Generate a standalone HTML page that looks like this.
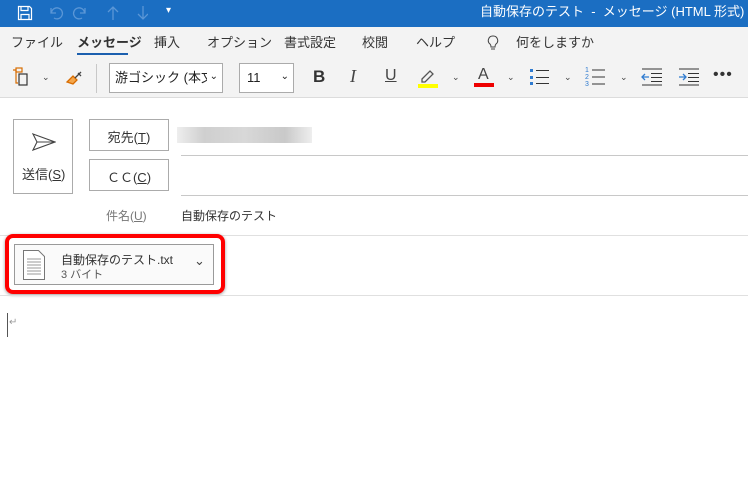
<!DOCTYPE html>
<html><head><meta charset="utf-8"><style>
*{margin:0;padding:0;box-sizing:border-box}
body{width:748px;height:499px;overflow:hidden;background:#fff;font-family:"Liberation Sans","Noto Sans CJK JP",sans-serif;color:#333;position:relative}
.a{position:absolute}
#title{left:0;top:0;width:748px;height:27px;background:#1b6ec2;color:#fff}
#ribbon{left:0;top:27px;width:748px;height:71px;background:#f3f3f3;border-bottom:1px solid #dcdcdc}
.t{font-size:13px;top:34px;color:#333;line-height:18px}
.box{border:1px solid #ababab;background:#fff}
.ln{height:1px;background:#c8c8c8}
</style></head><body>
<div id="title" class="a">
<svg class="a" style="left:17px;top:5px" width="16" height="16" viewBox="0 0 16 16" fill="none" stroke="#fff" stroke-width="1.2"><path d="M1.5 1.5h11l2 2v11h-13z M4 1.5v4h7v-4 M4 14.5v-5h8v5"/></svg>
<svg class="a" style="left:48px;top:5px" width="100" height="16" viewBox="0 0 100 16" fill="none" stroke="#5a96d6" stroke-width="1.3"><path d="M3 3v5h5 M3.5 7.5A5.5 5.5 0 1 1 6 13"/><path d="M37 3v5h-5 M36.5 7.5A5.5 5.5 0 1 0 34 13"/><path d="M65 15V2 M60 7l5-5 5 5"/><path d="M95 1v13 M90 9l5 5 5-5"/></svg>
<div class="a" style="left:166px;top:5px;font-size:10px;color:#fff">▾</div>
<div class="a" style="left:480px;top:3px;font-size:13px;line-height:18px">自動保存のテスト &nbsp;- &nbsp;メッセージ (HTML 形式)</div>
</div>
<div id="ribbon" class="a"></div>
<div class="a t" style="left:11px">ファイル</div>
<div class="a t" style="left:77px;font-weight:bold">メッセージ</div>
<div class="a" style="left:77px;top:53px;width:51px;height:2px;background:#1b5fae"></div>
<div class="a t" style="left:154px">挿入</div>
<div class="a t" style="left:207px">オプション</div>
<div class="a t" style="left:284px">書式設定</div>
<div class="a t" style="left:362px">校閲</div>
<div class="a t" style="left:416px">ヘルプ</div>
<svg class="a" style="left:487px;top:35px" width="12" height="16" viewBox="0 0 12 16" fill="none" stroke="#444" stroke-width="1"><path d="M6 1a4.5 4.5 0 0 0-3 8c1 1 1 2 1 3h4c0-1 0-2 1-3A4.5 4.5 0 0 0 6 1z M4 14h4"/></svg>
<div class="a t" style="left:516px">何をしますか</div>
<svg class="a" style="left:11px;top:66px" width="22" height="22" viewBox="0 0 22 22" fill="none" stroke-width="1.2"><path d="M2 4h3v13h2" stroke="#d86c00"/><rect x="5" y="2" width="6" height="4" stroke="#d86c00"/><rect x="8" y="8" width="8" height="11" stroke="#333"/></svg>
<div class="a" style="left:42px;top:72px;font-size:9px;color:#444">⌄</div>
<svg class="a" style="left:65px;top:68px" width="20" height="18" viewBox="0 0 20 18" fill="none" stroke-width="1.3"><path d="M2 14l6-6 4 4-4 4z" stroke="#d86c00" fill="#f5a64a"/><path d="M10 10l6-6M13 5l3 3" stroke="#444"/></svg>
<div class="a" style="left:96px;top:64px;width:1px;height:29px;background:#c8c8c8"></div>
<div class="a box" style="left:109px;top:63px;width:114px;height:30px;font-size:13px;line-height:16px;padding:6px 0 0 5px;color:#222;white-space:nowrap;overflow:hidden">游ゴシック (本文の<span class="a" style="right:0;top:5px;background:#fff;padding:0 4px 0 3px;font-size:10px">⌄</span></div>
<div class="a box" style="left:239px;top:63px;width:55px;height:30px;font-size:13px;line-height:16px;padding:6px 0 0 7px;color:#222">11<span class="a" style="right:4px;top:5px;font-size:10px">⌄</span></div>
<div class="a" style="left:313px;top:67px;font-size:17px;font-weight:bold;color:#333">B</div>
<div class="a" style="left:350px;top:66px;font-size:18px;font-style:italic;font-family:'Liberation Serif',serif;color:#444">I</div>
<div class="a" style="left:385px;top:67px;font-size:16px;color:#444;text-decoration:underline">U</div>
<svg class="a" style="left:418px;top:67px" width="20" height="22" viewBox="0 0 20 22"><path d="M4 12l8-8 3 3-8 8H4z" fill="none" stroke="#555" stroke-width="1.3"/><rect x="0" y="17" width="20" height="4" fill="#ffff00"/></svg>
<div class="a" style="left:452px;top:72px;font-size:9px;color:#444">⌄</div>
<div class="a" style="left:478px;top:66px;font-size:16px;color:#444">A</div>
<div class="a" style="left:474px;top:83px;width:20px;height:4px;background:#e00"></div>
<div class="a" style="left:507px;top:72px;font-size:9px;color:#444">⌄</div>
<svg class="a" style="left:530px;top:68px" width="20" height="18" viewBox="0 0 20 18"><g fill="#2f7bd0"><rect x="0" y="1" width="3" height="3"/><rect x="0" y="8" width="3" height="3"/><rect x="0" y="14" width="3" height="3"/></g><g stroke="#333"><path d="M6 2.5h13M6 9.5h13M6 15.5h13"/></g></svg>
<div class="a" style="left:564px;top:72px;font-size:9px;color:#444">⌄</div>
<svg class="a" style="left:585px;top:66px" width="22" height="20" viewBox="0 0 22 20"><g fill="#2f7bd0" font-size="7" font-family="Liberation Sans"><text x="0" y="6">1</text><text x="0" y="13">2</text><text x="0" y="20">3</text></g><g stroke="#333"><path d="M7 4h13M7 11h13M7 18h13"/></g></svg>
<div class="a" style="left:620px;top:72px;font-size:9px;color:#444">⌄</div>
<svg class="a" style="left:641px;top:68px" width="22" height="18" viewBox="0 0 22 18" fill="none"><path d="M1 1h20M10 5.5h11M10 9.5h11M10 13.5h11M1 17h20" stroke="#333"/><path d="M8 9H1M4 6L1 9l3 3" stroke="#2f7bd0" stroke-width="1.3"/></svg>
<svg class="a" style="left:678px;top:68px" width="22" height="18" viewBox="0 0 22 18" fill="none"><path d="M1 1h20M10 5.5h11M10 9.5h11M10 13.5h11M1 17h20" stroke="#333"/><path d="M1 9h7M5 6l3 3-3 3" stroke="#2f7bd0" stroke-width="1.3"/></svg>
<div class="a" style="left:713px;top:66px;font-size:16px;color:#333;letter-spacing:1px">•••</div>
<div class="a box" style="left:13px;top:119px;width:60px;height:75px"></div>
<svg class="a" style="left:32px;top:133px" width="24" height="18" viewBox="0 0 24 18" fill="none" stroke="#444" stroke-width="1.1"><path d="M1 1l22 8-22 8 4-8z M5 9h18"/></svg>
<div class="a" style="left:22px;top:164px;font-size:13px">送信(<u>S</u>)</div>
<div class="a box" style="left:89px;top:119px;width:80px;height:32px;font-size:13px;text-align:center;padding-top:7px">宛先(<u>T</u>)</div>
<div class="a box" style="left:89px;top:159px;width:80px;height:32px;font-size:13px;text-align:center;padding-top:7px">ＣＣ(<u>C</u>)</div>
<div class="a" style="left:177px;top:127px;width:135px;height:16px;background:linear-gradient(90deg,#eee,#cfcfcf 20%,#d8d8d8 50%,#c9c9c9 80%,#eee)"></div>
<div class="a ln" style="left:181px;top:155px;width:567px"></div>
<div class="a ln" style="left:181px;top:195px;width:567px"></div>
<div class="a" style="left:106px;top:207px;font-size:12px;color:#777">件名(<u>U</u>)</div>
<div class="a" style="left:181px;top:207px;font-size:12px">自動保存のテスト</div>
<div class="a ln" style="left:0;top:235px;width:748px;background:#e0e0e0"></div>
<div class="a" style="left:5px;top:234px;width:220px;height:60px;border:4px solid #f00;border-radius:8px;box-shadow:0 1px 3px rgba(0,0,0,.4)"></div>
<div class="a" style="left:14px;top:244px;width:200px;height:41px;border:1px solid #9a9a9a;background:#fafafa"></div>
<svg class="a" style="left:23px;top:250px" width="22" height="30" viewBox="0 0 22 30" fill="#fff" stroke="#777"><path d="M.5.5h15l6 6v23H.5z"/><path d="M4 9h14M4 12h14M4 15h14M4 18h14M4 21h14M4 24h14" stroke="#999"/></svg>
<div class="a" style="left:61px;top:251px;font-size:12px;color:#333">自動保存のテスト.txt</div>
<div class="a" style="left:61px;top:266px;font-size:11px;color:#555">3 バイト</div>
<div class="a" style="left:194px;top:253px;font-size:13px;color:#444">⌄</div>
<div class="a ln" style="left:0;top:295px;width:748px;background:#e0e0e0"></div>
<div class="a" style="left:7px;top:313px;width:1px;height:24px;background:#555"></div>
<div class="a" style="left:9px;top:317px;font-size:10px;color:#999">↵</div>
</body></html>
